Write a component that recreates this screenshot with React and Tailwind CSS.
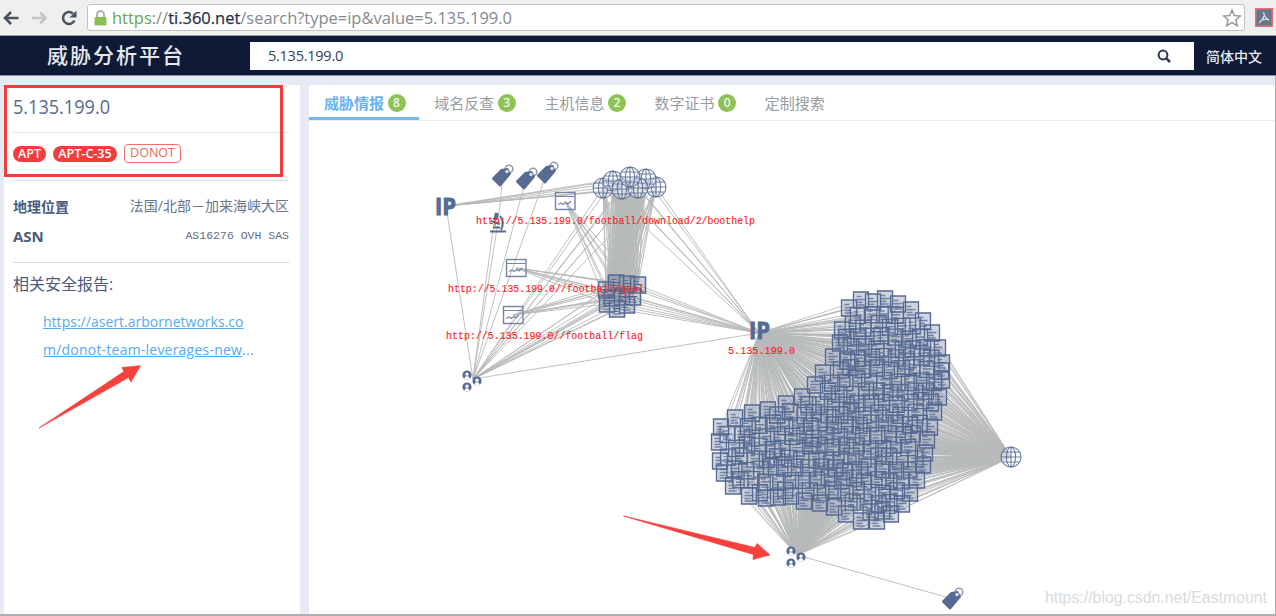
import React from "react";

const BLUE = "#566a92";
const WIRE = "#b7b9ba";

const TABS = [
  { label: "威胁情报", count: 8, active: true },
  { label: "域名反查", count: 3 },
  { label: "主机信息", count: 2 },
  { label: "数字证书", count: 0 },
  { label: "定制搜索" },
];

// Boundary of the large sample cluster, clockwise from the top.
const OUTLINE = [
  [861, 300], [873, 302], [885, 299], [898, 304], [911, 310], [923, 321], [932, 333], [938, 348],
  [942, 363], [942, 380], [939, 397], [934, 412], [930, 427], [927, 440], [925, 453], [923, 465],
  [917, 480], [910, 493], [902, 504], [891, 514], [877, 521], [861, 521], [846, 514],
  [834, 507], [820, 503], [804, 501], [791, 496], [778, 497], [766, 498], [749, 496],
  [733, 486], [724, 473], [720, 461], [719, 442], [721, 427], [735, 418], [752, 413],
  [768, 410], [786, 404], [802, 397], [815, 385], [823, 373], [833, 357], [840, 343],
  [842, 330], [849, 308],
];

function inside(x, y) {
  let hit = false;
  for (let i = 0, j = OUTLINE.length - 1; i < OUTLINE.length; j = i++) {
    const [xi, yi] = OUTLINE[i];
    const [xj, yj] = OUTLINE[j];
    if (yi > y !== yj > y && x < ((xj - xi) * (y - yi)) / (yj - yi) + xi) hit = !hit;
  }
  return hit;
}

function buildCluster() {
  const pts = [];
  let seed = 17;
  const rnd = () => {
    seed = (seed * 16807) % 2147483647;
    return seed / 2147483647 - 0.5;
  };
  for (let r = 0, y = 304; y < 522; y += 11, r++) {
    for (let x = 716 + (r % 2) * 6; x < 946; x += 12.4) {
      const px = x + rnd() * 4;
      const py = y + rnd() * 5;
      if (inside(px, py) && OUTLINE.every(([a, b]) => Math.hypot(a - px, b - py) > 8)) pts.push([px, py]);
    }
  }
  return [...pts, ...OUTLINE];
}

const CLUSTER = buildCluster();
const GLOBES = [[603, 188], [656, 187], [613, 181], [646, 179], [622, 189], [638, 188], [630, 177]];
const FILES = [[606, 290], [616, 283], [627, 284], [638, 285], [612, 298], [622, 297], [633, 297], [607, 304], [617, 309], [627, 305]];
const PAGES = [[565, 201], [516, 268], [513, 315]];
const TAGS = [[503, 176], [527, 179], [548, 173], [953, 599]];
const IP_LEFT = [446, 206];
const IP_MAIN = [759, 333];
const GROUP_LEFT = [473, 379];
const GROUP_MAIN = [797, 555];
const GLOBE_MAIN = [1011, 457];

const cross = (as, bs) => as.flatMap((a) => bs.map((b) => [a, b]));

const DENSE = cross([IP_MAIN, GROUP_MAIN, GLOBE_MAIN], CLUSTER);
const LINKS = [
  ...cross(GLOBES, FILES),
  ...cross([[627, 180], [634, 184], [645, 186], [618, 184]], FILES),
  ...cross([IP_LEFT, GROUP_LEFT, IP_MAIN], GLOBES),
  ...cross([GROUP_LEFT, IP_MAIN], FILES),
  ...cross(PAGES, FILES.slice(0, 8)),
  [IP_LEFT, GROUP_LEFT],
  [GROUP_LEFT, IP_MAIN],
  [[503, 176], [498, 222]],
  [[498, 222], GROUP_LEFT],
  [[494, 222], GROUP_LEFT],
  [[526, 178], GROUP_LEFT],
  [[547, 172], GROUP_LEFT],
  [GROUP_MAIN, [953, 599]],
];

function wirePath(list) {
  return list.map(([[a, b], [c, d]]) => `M${a.toFixed(1)} ${b.toFixed(1)}L${c.toFixed(1)} ${d.toFixed(1)}`).join("");
}

function Globe({ x, y }) {
  return (
    <g transform={`translate(${x} ${y})`} fill="none" stroke={BLUE} strokeOpacity="0.85" strokeWidth="1.1">
      <circle r="10" fill="#fff" fillOpacity="0.45" />
      <ellipse rx="4.6" ry="10" />
      <path d="M0-10V10M-10 0H10M-8.6-5H8.6M-8.6 5H8.6" />
    </g>
  );
}

function Tag({ x, y }) {
  return (
    <g transform={`translate(${x} ${y})`}>
      <circle cx="6" cy="-7" r="3.8" fill="none" stroke="#8d99b2" strokeWidth="1.5" />
      <path d="M-11 2L-2-7L5-8L8-2L-2 10Q-3 11-4 10L-11 3Z" fill={BLUE} />
      <circle cx="4" cy="-4.5" r="1.7" fill="#dfe3ea" />
    </g>
  );
}

function Page({ x, y }) {
  return (
    <g transform={`translate(${x} ${y})`} fill="none" stroke="#7684a5">
      <rect x="-9.5" y="-8.5" width="19.5" height="17" strokeWidth="1.4" />
      <path d="M-9-4.5H9.5" strokeWidth="1" />
      <path d="M-7 3.5L-4 2L-2 3.5L1 1.5L3 3L6 0" strokeWidth="1.3" />
    </g>
  );
}

function Group({ x, y }) {
  return (
    <g transform={`translate(${x} ${y})`}>
      {[[-5, -7], [5, -1], [-5, 5]].map(([a, b]) => (
        <g key={`${a}${b}`} transform={`translate(${a} ${b})`}>
          <circle r="4.6" fill={BLUE} />
          <circle cy="-0.8" r="1.6" fill="#fff" />
          <path d="M-2.8 3.8Q-2 1 0 1T2.8 3.8Q0 5.4-2.8 3.8Z" fill="#fff" />
        </g>
      ))}
    </g>
  );
}

function filePath(list) {
  return list
    .map(([x, y]) => `M${x - 7.5} ${y - 8}h15v16h-15Z`)
    .join("");
}

function fileLines(list) {
  return list
    .map(([x, y]) => `M${x - 4.5} ${y - 3.5}h5M${x - 4.5} ${y - 0.5}h9M${x - 4.5} ${y + 2.5}h6M${x - 4.5} ${y + 5}h8`)
    .join("");
}

function Label({ x, y, w, children }) {
  return (
    <text x={x} y={y} textLength={w} lengthAdjust="spacingAndGlyphs" fill="#ff1c1c" stroke="#ff1c1c" strokeWidth="0.15" className="font-['Liberation_Mono',monospace] text-[11px]">
      {children}
    </text>
  );
}

function IpMark({ x, y }) {
  return (
    <text x={x} y={y} textLength="21" lengthAdjust="spacingAndGlyphs" fill={BLUE} stroke={BLUE} strokeWidth="1" className="font-['Open_Sans',sans-serif] text-[24px] font-bold">
      IP
    </text>
  );
}

function Graph() {
  return (
    <svg viewBox="309 121 966 493" className="block h-[493px] w-[966px]">
      <path d={wirePath(LINKS)} stroke={WIRE} strokeWidth="0.9" fill="none" />
      <path d={wirePath(DENSE)} stroke={WIRE} strokeWidth="0.85" fill="none" />
      {GLOBES.map(([x, y]) => <Globe key={x} x={x} y={y} />)}
      <Globe x={1011} y={457} />
      <path d={fileLines(FILES)} stroke={BLUE} strokeWidth="1" />
      <path d={filePath(FILES)} stroke={BLUE} strokeWidth="1.5" fill={BLUE} fillOpacity="0.3" />
      <path d={filePath(CLUSTER)} fill="#a9b3c8" fillOpacity="0.55" />
      <path d={fileLines(CLUSTER)} stroke={BLUE} strokeWidth="1.4" strokeOpacity="0.75" />
      <path d={filePath(CLUSTER)} stroke={BLUE} strokeWidth="1.35" fill="none" />
      {PAGES.map(([x, y]) => <Page key={x} x={x} y={y} />)}
      {TAGS.map(([x, y]) => <Tag key={x} x={x} y={y} />)}
      <Group x={472} y={382} />
      <Group x={796} y={558} />
      <g fill="none" stroke={BLUE} strokeWidth="2">
        <path d="M490 231.5H506M493 227.5H500M500 216Q505 221 501 230" />
        <path d="M497 213L495 220" strokeWidth="4" />
        <path d="M491 221L500 224" />
      </g>
      <IpMark x={435} y={215} />
      <IpMark x={749} y={339} />
      <Label x={476} y={224} w={279}>http://5.135.199.0/football/download/2/boothelp</Label>
      <Label x={448} y={292} w={196}>http://5.135.199.0//football/goal</Label>
      <Label x={446} y={338.5} w={197}>http://5.135.199.0//football/flag</Label>
      <Label x={728} y={354} w={67}>5.135.199.0</Label>
    </svg>
  );
}

function BrowserBar() {
  return (
    <div className="flex h-9 shrink-0 items-center border-b border-[#9a9da3] bg-[#efefef] pr-[3px]">
      <div className="flex w-[87px] items-center gap-[13px] pl-[3px]">
        <svg viewBox="0 0 16 16" className="size-4" fill="none" stroke="#4c5360" strokeWidth="2.6"><path d="M15.5 8H2M8 2L2 8L8 14" /></svg>
        <svg viewBox="0 0 16 16" className="size-4" fill="none" stroke="#c6c6c6" strokeWidth="2.6"><path d="M0 8H14M8 2.5L13.5 8L8 13.5" /></svg>
        <svg viewBox="0 0 16 16" className="size-4" fill="none" stroke="#4c5360" strokeWidth="2.5"><path d="M13.5 10.5A6 6 0 1 1 12 3.5" /><path d="M15.5 0.5V7.5H8.5Z" fill="#4c5360" stroke="none" /></svg>
      </div>
      <div className="flex h-[27px] w-[1158px] items-center rounded-[3px] border border-[#c3c3c3] bg-white pl-[6px] pr-[2px]">
        <svg viewBox="0 0 13 16" className="h-4 w-[13px]"><path d="M3 8V4.5a3.5 3.5 0 0 1 7 0V8" fill="none" stroke="#b1b5ac" strokeWidth="2" /><rect x="0.5" y="7" width="12" height="8.5" rx="1" fill="#8cc152" /></svg>
        <svg className="ml-[5px] h-6 w-[405px] overflow-visible font-['Open_Sans',sans-serif] text-[16px]">
          <text x="0" y="18" textLength="400" lengthAdjust="spacingAndGlyphs" fill="#85898f">
            <tspan fill="#62aa47">https</tspan>://<tspan fill="#25304a" stroke="#25304a" strokeWidth="0.25">ti.360.net</tspan>/search?type=ip&amp;value=5.135.199.0
          </text>
        </svg>
        <svg viewBox="0 0 24 24" className="ml-auto size-[20px]" fill="none" stroke="#969aa0" strokeWidth="1.8"><path d="M12 2.5L14.8 9L22 9.6L16.6 14.2L18.3 21.3L12 17.5L5.7 21.3L7.4 14.2L2 9.6L9.2 9Z" /></svg>
      </div>
      <svg viewBox="0 0 18 19" className="ml-auto h-[19px] w-[18px]"><rect x="0.75" y="0.75" width="16.5" height="17.5" fill="#66758c" stroke="#e9706d" strokeWidth="1.5" /><path d="M8.500 4Q9.500 10 14 12M9 8Q8 12 4 15M6 12.500Q10 10.500 14 12" fill="none" stroke="#d5dae1" strokeWidth="1.4" /></svg>
    </div>
  );
}

function Header() {
  return (
    <header className="flex h-10 shrink-0 items-center border-b border-[#8d94a5] bg-[#0f1b36]">
      <h1 className="w-[250px] whitespace-nowrap pb-[2px] pl-[47px] font-['Noto_Sans_CJK_SC',sans-serif] text-[21px] font-medium leading-none tracking-[2px] text-[#e6e8ed]">威胁分析平台</h1>
      <div className="flex h-7 w-[944px] items-center justify-between bg-white pl-[18px] pr-[23px]">
        <span className="font-['Open_Sans',sans-serif] text-[14.6px] tracking-[-0.3px] text-[#34425f]">5.135.199.0</span>
        <svg viewBox="0 0 14 14" className="size-[14px]" fill="none" stroke="#2a3651" strokeWidth="2"><circle cx="6" cy="6" r="4.4" /><path d="M9.3 9.3L13 13" strokeWidth="2.5" /></svg>
      </div>
      <span className="pl-[12px] font-['Noto_Sans_CJK_SC',sans-serif] text-[14px] font-medium leading-none text-[#e9ebef]">简体中文</span>
    </header>
  );
}

function Sidebar() {
  return (
    <aside className="relative w-[296px] shrink-0 bg-white pl-[9px] pr-[11px] font-['Open_Sans','Noto_Sans_CJK_SC',sans-serif] text-[#4b5b7b]">
      <div className="flex h-[48px] items-center border-b border-[#dde4ee] pb-[3px]">
        <svg className="h-7 w-[100px] overflow-visible text-[19.5px]"><text x="0" y="21" textLength="97" lengthAdjust="spacingAndGlyphs" fill="#5a6a88">5.135.199.0</text></svg>
      </div>
      <div className="flex h-12 items-center gap-[7px] border-b border-[#dde4ee] pb-[6px] text-[12.5px] leading-none">
        <span className="mt-[1px] flex h-4 w-[33px] items-center justify-center rounded-full bg-[#f33d3d] font-semibold text-white">APT</span>
        <span className="mt-[1px] flex h-4 w-[64px] items-center justify-center rounded-full bg-[#f33d3d] font-semibold text-white">APT-C-35</span>
        <span className="-mt-[1px] flex h-[19px] w-[57px] items-center justify-center rounded-[4px] border border-[#ee706b] text-[#e8655f]">DONOT</span>
      </div>
      <div className="flex h-12 items-center justify-between">
        <span className="pt-[2px] text-[14px] font-bold">地理位置</span>
        <span className="text-[14px] text-[#6a7588]">法国/北部－加来海峡大区</span>
      </div>
      <div className="flex h-[34px] items-start justify-between border-b border-[#d5d9df] leading-none">
        <span className="text-[15px] font-bold">ASN</span>
        <span className="pt-[1px] font-['Liberation_Mono',monospace] text-[11.5px] text-[#5f6b80]">AS16276 OVH SAS</span>
      </div>
      <div className="flex h-[42px] items-center text-[16px]">相关安全报告:</div>
      <a className="ml-[30px] block h-7 w-max text-[14px] leading-[34px] tracking-[0.02px] text-[#55aaf0] underline">https://asert.arbornetworks.co</a>
      <a className="ml-[30px] block h-7 w-max text-[14px] leading-[34px] tracking-[0.22px] text-[#55aaf0]"><span className="underline">m/donot-team-leverages-new</span>...</a>
      <div className="absolute left-0 top-0 h-[92px] w-[279px] border-[3px] border-[#f33d3d]" />
    </aside>
  );
}

function Tabs() {
  return (
    <nav className="flex h-9 shrink-0 items-start border-b border-[#ececee] font-['Noto_Sans_CJK_SC',sans-serif] text-[15px] leading-none">
      {TABS.map((t) => (
        <div key={t.label} className={`flex h-[35px] w-[110.2px] items-center gap-[3.5px] border-b-[3px] pl-[15px] pt-[2px] ${t.active ? "border-[#74b8f1] font-bold text-[#6bb2ef]" : "border-transparent text-[#979ca3]"}`}>
          <span className="whitespace-nowrap">{t.label}</span>
          {t.count !== undefined && (
            <span className="mt-[1px] flex size-[18px] items-center justify-center rounded-full bg-[#8fc257] font-['Open_Sans',sans-serif] text-[12px] font-semibold text-[#eef6e4]">{t.count}</span>
          )}
        </div>
      ))}
    </nav>
  );
}

export default function App() {
  return (
    <div className="relative flex h-[616px] w-[1276px] flex-col overflow-hidden bg-[#e6ebf3]">
      <BrowserBar />
      <Header />
      <div className="flex min-h-0 flex-1 gap-[9px] border-b-2 border-r border-[#adafb3] pl-1 pt-[9px]">
        <Sidebar />
        <main className="flex min-w-0 flex-1 flex-col bg-white">
          <Tabs />
          <Graph />
        </main>
      </div>
      <svg viewBox="0 0 1276 616" className="pointer-events-none absolute inset-0 h-[616px] w-[1276px]">
        <g fill="#f6413e" stroke="#f6413e" strokeWidth="0.7" strokeLinejoin="round">
          <path d="M39 428L124 371.5L122 367.5L140.5 365.7L131 382L128.5 377.5Z" />
          <path d="M623.5 516L755 547.5L757 543.5L770 555L753 559.5L753.5 554.5Z" />
        </g>
        <text x="1045" y="603" textLength="222" lengthAdjust="spacingAndGlyphs" fill="#d9dadc" className="font-['Liberation_Sans',sans-serif] text-[16px]">https://blog.csdn.net/Eastmount</text>
      </svg>
    </div>
  );
}
